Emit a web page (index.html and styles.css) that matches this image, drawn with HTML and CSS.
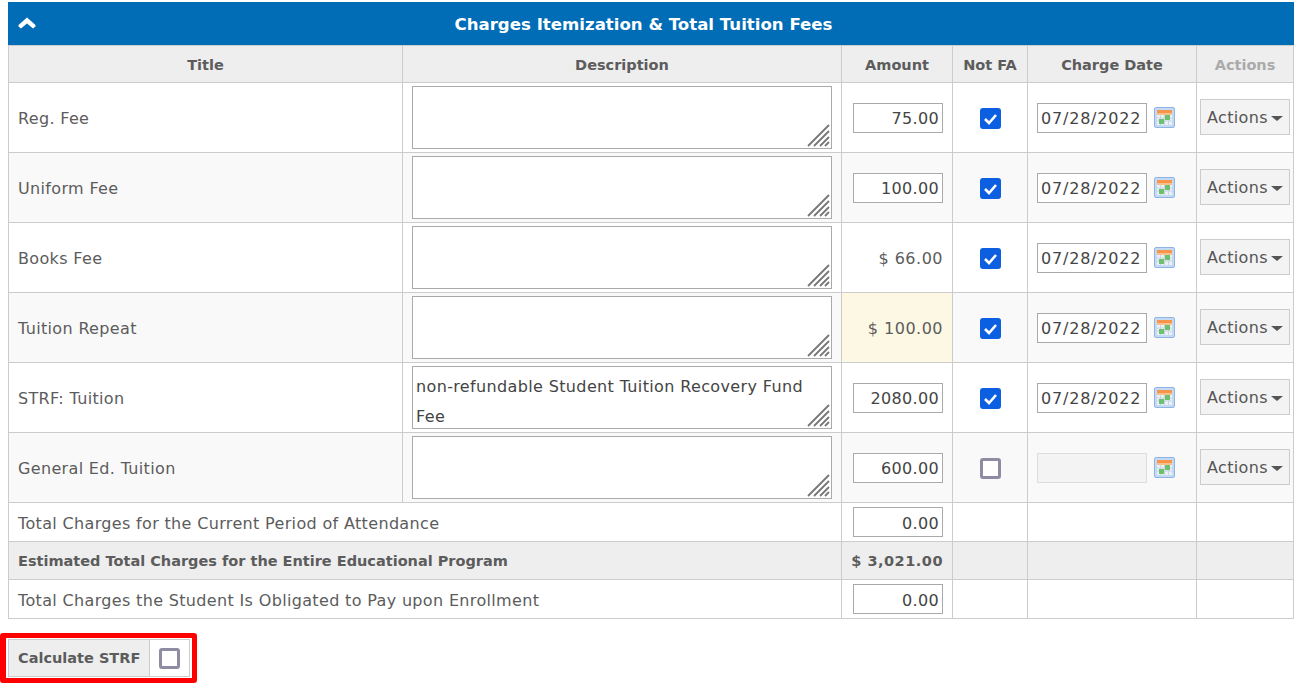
FILE: index.html
```html
<!DOCTYPE html>
<html lang="en">
<head>
    <meta charset="UTF-8">
    <meta name="viewport" content="width=device-width, initial-scale=1.0">
    <title>Charges Itemization</title>
    <link rel="stylesheet" href="styles.css">
</head>
<body>
    <svg class="defs" width="0" height="0">
        <symbol id="cal" viewBox="0 0 21 21">
            <rect x="0.5" y="0.5" width="20" height="20" rx="1.500" fill="#c4d9f4" stroke="#8fb4e4"/>
            <rect x="3" y="3" width="15" height="3" fill="#f7954a"/>
            <rect x="3" y="6" width="15" height="2" fill="#f9c08f"/>
            <rect x="3" y="8" width="15" height="10" fill="#eaf0f5"/>
            <path d="M3 11h15M3 14h15M6.500 8v10M10.500 8v10M14.500 8v10" stroke="#c2cedb" stroke-width="0.8"/>
            <rect x="11" y="8" width="5" height="5" fill="#6cc06e"/>
            <rect x="5" y="12" width="5" height="5" fill="#6cc06e"/>
        </symbol>
    </svg>

    <section class="panel">
        <header class="panel-head">
            <svg class="chevron" width="18" height="12" viewBox="0 0 18 12"><path d="M0.500 8 9 0.500 17.500 8v1.500L15 11.500 9 6.500l-6 5-2.500-2z" fill="#fff"/></svg>
            <h3>Charges Itemization &amp; Total Tuition Fees</h3>
        </header>
        <table class="charges">
            <colgroup>
                <col class="c-title"><col class="c-desc"><col class="c-amount"><col class="c-fa"><col class="c-date"><col class="c-actions">
            </colgroup>
            <thead>
                <tr>
                    <th>Title</th><th>Description</th><th>Amount</th><th>Not FA</th><th>Charge Date</th><th class="muted">Actions</th>
                </tr>
            </thead>
            <tbody>
                <tr class="item">
                    <td class="name">Reg. Fee</td>
                    <td class="desc"><textarea></textarea></td>
                    <td class="amount"><input class="num" value="75.00"></td>
                    <td class="check"><input type="checkbox" checked></td>
                    <td><div class="date"><input value="07/28/2022"><svg width="21" height="21"><use href="#cal"/></svg></div></td>
                    <td class="act"><button>Actions<i class="caret"></i></button></td>
                </tr>
                <tr class="item alt">
                    <td class="name">Uniform Fee</td>
                    <td class="desc"><textarea></textarea></td>
                    <td class="amount"><input class="num" value="100.00"></td>
                    <td class="check"><input type="checkbox" checked></td>
                    <td><div class="date"><input value="07/28/2022"><svg width="21" height="21"><use href="#cal"/></svg></div></td>
                    <td class="act"><button>Actions<i class="caret"></i></button></td>
                </tr>
                <tr class="item">
                    <td class="name">Books Fee</td>
                    <td class="desc"><textarea></textarea></td>
                    <td class="amount plain">$ 66.00</td>
                    <td class="check"><input type="checkbox" checked></td>
                    <td><div class="date"><input value="07/28/2022"><svg width="21" height="21"><use href="#cal"/></svg></div></td>
                    <td class="act"><button>Actions<i class="caret"></i></button></td>
                </tr>
                <tr class="item alt">
                    <td class="name">Tuition Repeat</td>
                    <td class="desc"><textarea></textarea></td>
                    <td class="amount plain warn">$ 100.00</td>
                    <td class="check"><input type="checkbox" checked></td>
                    <td><div class="date"><input value="07/28/2022"><svg width="21" height="21"><use href="#cal"/></svg></div></td>
                    <td class="act"><button>Actions<i class="caret"></i></button></td>
                </tr>
                <tr class="item">
                    <td class="name">STRF: Tuition</td>
                    <td class="desc"><textarea>non-refundable Student Tuition Recovery Fund Fee</textarea></td>
                    <td class="amount"><input class="num" value="2080.00"></td>
                    <td class="check"><input type="checkbox" checked></td>
                    <td><div class="date"><input value="07/28/2022"><svg width="21" height="21"><use href="#cal"/></svg></div></td>
                    <td class="act"><button>Actions<i class="caret"></i></button></td>
                </tr>
                <tr class="item alt">
                    <td class="name">General Ed. Tuition</td>
                    <td class="desc"><textarea></textarea></td>
                    <td class="amount"><input class="num" value="600.00"></td>
                    <td class="check"><input type="checkbox"></td>
                    <td><div class="date"><input disabled><svg width="21" height="21"><use href="#cal"/></svg></div></td>
                    <td class="act"><button>Actions<i class="caret"></i></button></td>
                </tr>
                <tr class="sum">
                    <td colspan="2">Total Charges for the Current Period of Attendance</td>
                    <td class="amount"><input class="num" value="0.00"></td>
                    <td></td><td></td><td></td>
                </tr>
                <tr class="sum total">
                    <td colspan="2">Estimated Total Charges for the Entire Educational Program</td>
                    <td class="amount">$ 3,021.00</td>
                    <td></td><td></td><td></td>
                </tr>
                <tr class="sum">
                    <td colspan="2">Total Charges the Student Is Obligated to Pay upon Enrollment</td>
                    <td class="amount"><input class="num" value="0.00"></td>
                    <td></td><td></td><td></td>
                </tr>
            </tbody>
        </table>
    </section>

    <div class="strf">
        <span class="strf-label">Calculate STRF</span>
        <span class="strf-box"><input type="checkbox"></span>
    </div>
</body>
</html>
```

FILE: styles.css
```css
* {
    box-sizing: border-box;
}

body {
    margin: 0;
    padding: 2px 2px 0 0;
    background: #fff;
    color: #5c5c5c;
    font-family: "DejaVu Sans", sans-serif;
    font-size: 16px;
    letter-spacing: 0.34px;
}

.defs {
    position: absolute;
}

.panel {
    margin-left: 8px;
}

.panel-head {
    position: relative;
    height: 43px;
    padding: 1px 15px 0 0;
    background: #006db6;
    color: #fff;
    display: flex;
    align-items: center;
    justify-content: center;
}

.panel-head h3 {
    margin: 0;
    font-size: 16.6px;
    font-weight: bold;
    letter-spacing: 0;
}

.chevron {
    position: absolute;
    left: 10px;
    top: 15px;
}

.charges {
    width: 100%;
    table-layout: fixed;
    border-collapse: collapse;
    border: 1px solid #ccc;
}

.c-title { width: 394px; }
.c-desc { width: 439px; }
.c-amount { width: 111px; }
.c-fa { width: 75px; }
.c-date { width: 169px; }
.c-actions { width: 97px; }

.charges th, .charges td {
    border: 1px solid #ccc;
    padding: 0 9px;
}

.charges th {
    height: 37px;
    padding-top: 2px;
    background: #eee;
    font-size: 14.5px;
    font-weight: bold;
    letter-spacing: 0;
    text-align: center;
}

.charges th.muted {
    color: #aaa;
}

.item {
    height: 70px;
}

.charges td.name {
    padding-top: 2px;
}

.alt td {
    background: #f9f9f9;
}

.sum {
    height: 39px;
}

.sum td {
    padding-top: 2px;
}

.sum.total {
    height: 38px;
}

.charges .sum.total td {
    padding-top: 0;
    background: #eee;
    font-size: 14.5px;
    font-weight: bold;
    letter-spacing: 0;
}

.charges .sum.total td.amount {
    letter-spacing: 0.5px;
}

.charges td.desc {
    padding: 0 9px;
}

textarea {
    display: block;
    width: 420px;
    height: 63px;
    padding: 5px 3px 0;
    border: 1px solid #aaa;
    border-radius: 0;
    outline: none;
    resize: none;
    overflow: hidden;
    color: #444;
    font: 16px/30px "DejaVu Sans", sans-serif;
    letter-spacing: 0.36px;
    background: #fff url("data:image/svg+xml,%3Csvg xmlns='http://www.w3.org/2000/svg' width='23' height='23'%3E%3Cpath d='M1 22 22 1M7 22 22 7M13 22l9-9M18 22l4-4' stroke='%23777' stroke-width='1.800' fill='none'/%3E%3C/svg%3E") no-repeat right 1px bottom 1px;
}

.charges td.amount {
    padding: 0 9px 0 0;
    text-align: right;
}

.charges td.plain {
    padding-top: 2px;
    letter-spacing: 0.5px;
}

.charges td.warn {
    background: #fcf8e3;
}

input.num, .date input {
    height: 30px;
    border: 1px solid #aaa;
    border-radius: 0;
    padding: 1px 3px 0;
    color: #444;
    background: #fff;
    font: 16px "DejaVu Sans", sans-serif;
    letter-spacing: 0.34px;
}

input.num {
    display: block;
    width: 90px;
    margin-left: auto;
    text-align: right;
}

.sum input.num {
    padding-top: 3px;
}

.check {
    text-align: center;
}

input[type="checkbox"] {
    appearance: none;
    display: block;
    width: 21px;
    height: 21px;
    margin: 2px auto 0;
    border: 3.500px solid #8e8ca2;
    border-radius: 3px;
    background: #fff;
}

input[type="checkbox"]:checked {
    border: 0;
    background: #0b5fe0 url("data:image/svg+xml,%3Csvg xmlns='http://www.w3.org/2000/svg' viewBox='0 0 21 21'%3E%3Cpath d='M5 11l4 4 7-8' stroke='%23fff' stroke-width='2.600' fill='none'/%3E%3C/svg%3E") center/21px no-repeat;
}

.date {
    display: flex;
    align-items: center;
    gap: 7px;
}

.date input {
    width: 110px;
    flex: none;
    margin-top: 1px;
    letter-spacing: 0.8px;
}

.date input:disabled {
    background: #f3f3f3;
    border-color: #ddd;
}

.date svg {
    flex: none;
}

.charges td.act {
    padding: 0 3px;
}

.act button {
    display: flex;
    align-items: center;
    width: 90px;
    height: 36px;
    margin-top: -2px;
    padding: 1px 6px 0;
    border: 1px solid #ccc;
    background: #f3f3f3;
    color: #555;
    font: 16px "DejaVu Sans", sans-serif;
    letter-spacing: 0.34px;
}

.caret {
    margin: 2px 0 0 3px;
    border-top: 5px solid #555;
    border-left: 6px solid transparent;
    border-right: 6px solid transparent;
}

.strf {
    display: inline-flex;
    margin-top: 14px;
    border: 5px solid #f00;
    border-left-width: 6px;
    border-radius: 3px;
    padding: 1px 2px 1px 2px;
    height: 50px;
}

.strf-label {
    display: flex;
    align-items: center;
    width: 142px;
    padding-left: 9px;
    background: #eee;
    border: 1px solid #ccc;
    font-size: 14.5px;
    font-weight: bold;
    letter-spacing: 0;
}

.strf-box {
    display: flex;
    align-items: center;
    justify-content: center;
    width: 40px;
    border: 1px solid #ccc;
    border-left: 0;
}

.strf-box input[type="checkbox"] {
    margin: 0;
}
```
